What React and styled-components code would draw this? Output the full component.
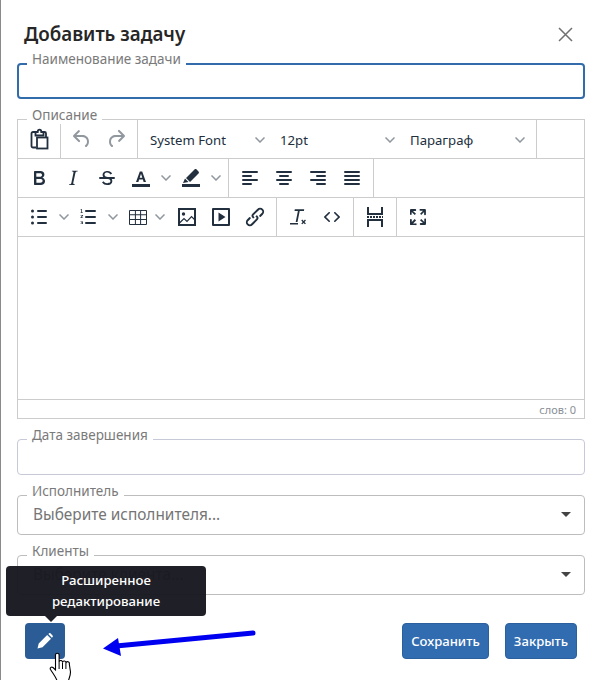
import React from "react";
import styled, { createGlobalStyle } from "styled-components";

const Global = createGlobalStyle`
  html, body { margin: 0; padding: 0; background: #fff; }
  body { font-family: "Noto Sans", "Liberation Sans", sans-serif; color: #212529; }
  * { box-sizing: border-box; }
`;

const Page = styled.div`
  position: relative;
  width: 601px;
  height: 680px;
  overflow: hidden;
  background: #fff;
  border-left: 1px solid #8a8a8a;
  padding: 0 16px 0 16px;
  &::before {
    content: "";
    position: absolute;
    left: -1px;
    top: 413px;
    width: 1px;
    height: 12px;
    background: #555;
  }
`;

const Header = styled.header`
  height: 63px;
  display: flex;
  justify-content: space-between;
  padding: 22px 12px 0 7px;
`;

const Title = styled.h1`
  margin: 0;
  font-size: 18.8px;
  line-height: 24px;
  font-weight: 600;
  color: #262626;
`;

const CloseIcon = styled.svg`
  width: 15px;
  height: 15px;
  margin-top: 5px;
  stroke: #707070;
  stroke-width: 1.5;
  fill: none;
`;

const Field = styled.div`
  position: relative;
  margin-bottom: ${(p) => p.$mb}px;
`;

const Label = styled.label`
  position: absolute;
  left: 10px;
  top: -12px;
  padding: 0 5px;
  background: #fff;
  font-size: 13.5px;
  line-height: 17px;
  color: #7a7a7a;
  z-index: 1;
`;

const TextBox = styled.div`
  height: ${(p) => p.$h}px;
  border: ${(p) => (p.$focus ? "2px solid #336cab" : "1px solid #c8c9d8")};
  border-radius: 4px;
  background: #fff;
`;

const Select = styled.div`
  height: 40px;
  border: 1px solid #bdbdbd;
  border-radius: 4px;
  display: flex;
  align-items: center;
  justify-content: space-between;
  padding: 0 8px 1px 15px;
  font-size: 15.4px;
  color: #757575;
  background: #fff;
`;

const Caret = styled.span`
  width: 0;
  height: 0;
  border-left: 5px solid transparent;
  border-right: 5px solid transparent;
  border-top: 5px solid #444;
  margin-right: 5px;
`;

const Editor = styled.div`
  border: 1px solid #ccc;
  height: 300px;
  display: flex;
  flex-direction: column;
`;

const Row = styled.div`
  height: 39px;
  flex: none;
  border-bottom: 1px solid #ccc;
  display: flex;
  align-items: stretch;
`;

const Group = styled.div`
  display: flex;
  align-items: center;
  padding: 0 4px;
`;

const Sep = styled.span`
  width: 1px;
  flex: none;
  background: #ccc;
`;

const Tool = styled.span`
  width: 34px;
  height: 38px;
  display: flex;
  align-items: center;
  justify-content: center;
  flex: none;
  color: ${(p) => (p.$off ? "rgba(34,47,62,.5)" : "#222f3e")};
`;

const ChevBox = styled.span`
  width: ${(p) => p.$w}px;
  display: flex;
  align-items: center;
  justify-content: ${(p) => p.$j || "center"};
  flex: none;
`;

const FontSelect = styled.span`
  width: 130px;
  height: 38px;
  display: flex;
  align-items: center;
  justify-content: space-between;
  padding: 1px 7px 0 8px;
  font-size: 13.2px;
  color: #222f3e;
  flex: none;
`;

const EditBody = styled.div`
  flex: 1;
`;

const Status = styled.div`
  height: 19px;
  flex: none;
  border-top: 1px solid #ccc;
  display: flex;
  align-items: center;
  justify-content: flex-end;
  padding-right: 8px;
  font-size: 11px;
  color: #8a8f96;
`;

const Footer = styled.footer`
  margin-top: 28px;
  display: flex;
  align-items: flex-start;
  padding: 0 8px;
  gap: 16px;
`;

const PrimaryButton = styled.button`
  height: 36px;
  width: ${(p) => p.$w}px;
  padding: 0;
  border: 1px solid #2c5f9e;
  border-radius: 4px;
  background: #326cb0;
  color: #fff;
  font: 500 13.1px "Noto Sans", sans-serif;
`;

const IconButton = styled.div`
  position: relative;
  width: 40px;
  height: 36px;
  margin-right: auto;
  border-radius: 4px;
  background: #2b5c95;
  display: flex;
  align-items: center;
  justify-content: center;
`;

const Tooltip = styled.div`
  position: absolute;
  left: -19px;
  bottom: 43px;
  width: 200px;
  height: 50px;
  padding-top: 4px;
  background: rgba(24, 24, 32, 0.97);
  border-radius: 4px;
  color: #fff;
  font-size: 13.2px;
  font-weight: 500;
  line-height: 21px;
  text-align: center;
  z-index: 3;
  &::after {
    content: "";
    position: absolute;
    left: 39px;
    top: 100%;
    border-left: 6px solid transparent;
    border-right: 6px solid transparent;
    border-top: 6px solid rgba(24, 24, 32, 0.97);
  }
`;

const Cursor = styled.svg`
  position: absolute;
  left: 48px;
  top: 652px;
  width: 24px;
  height: 28px;
  z-index: 4;
`;

const Arrow = styled.svg`
  position: absolute;
  left: 95px;
  top: 625px;
  width: 170px;
  height: 40px;
  z-index: 4;
`;

const I = ({ d, children }) => (
  <svg width="24" height="24" viewBox="0 0 24 24" fill="currentColor">
    {d ? <path d={d} /> : children}
  </svg>
);

const Chev = ({ c = "rgba(34,47,62,.5)" }) => (
  <svg width="10" height="6" viewBox="0 0 10 6" fill="none" stroke={c} strokeWidth="1.5">
    <path d="M.5.5 5 5 9.500.5" />
  </svg>
);

const P = {
  undo: "M6.400 8H12c3.700 0 6.200 2 6.800 5.100.6 2.700-.4 5.600-2.300 6.800a1 1 0 0 1-1-1.800c1.100-.7 1.800-2.700 1.400-4.600-.5-2.100-2.100-3.500-4.900-3.500H6.400l3.300 3.300a1 1 0 1 1-1.400 1.400l-5-5a1 1 0 0 1 0-1.400l5-5a1 1 0 0 1 1.400 1.400L6.400 8z",
  redo: "M17.600 10H12c-2.800 0-4.400 1.400-4.900 3.500-.4 2 .3 4 1.400 4.600a1 1 0 1 1-1 1.800c-2-1.200-2.900-4.100-2.300-6.800.6-3 3-5.100 6.800-5.100h5.600l-3.300-3.300a1 1 0 1 1 1.400-1.400l5 5a1 1 0 0 1 0 1.400l-5 5a1 1 0 0 1-1.400-1.400l3.300-3.300z",
  bold: "M7.800 19c-.3 0-.5 0-.6-.2l-.2-.5V5.700c0-.2 0-.4.2-.5l.6-.2h5c1.500 0 2.700.3 3.500 1 .7.6 1.100 1.400 1.100 2.500a3 3 0 0 1-.6 1.900c-.4.6-1 1-1.600 1.200.4.100.9.3 1.300.6s.8.7 1 1.200c.4.4.5 1 .5 1.600 0 1.300-.4 2.300-1.300 3-.8.7-2.100 1-3.800 1H7.800zm5-8.300c.6 0 1.200-.1 1.600-.5.4-.3.6-.7.6-1.300 0-1.100-.8-1.700-2.300-1.700H9.300v3.500h3.500zm.5 6c.7 0 1.300-.1 1.700-.4.4-.4.6-.9.6-1.500s-.2-1-.7-1.400c-.4-.3-1-.4-2-.4H9.400v3.800h3.900z",
  italic:
    "M16.700 4.700l-.1.9h-.3c-.6 0-1 0-1.400.3-.3.3-.4.6-.5 1.100l-2.100 9.800v.6c0 .5.4.8 1.400.8h.2l-.2.8H8l.2-.8h.2c1.100 0 1.800-.5 2-1.500l2-9.800.1-.5c0-.6-.4-.8-1.400-.8h-.3l.2-.9h5.800z",
  strike:
    "M15.600 8.500c-.5-.7-1-1.100-1.300-1.300-.6-.4-1.300-.6-2-.6-2.700 0-2.800 1.700-2.800 2.100 0 1.600 1.800 2 3.200 2.300 4.400.9 4.600 2.800 4.600 3.900 0 1.400-.7 4.100-5 4.100A6.200 6.200 0 0 1 7 16.400l1.500-1.100c.4.6 1.600 2 3.700 2 1.600 0 2.500-.4 3-1.200.4-.8.3-2-.8-2.600-.7-.4-1.600-.7-2.900-1-1-.2-3.900-.8-3.900-3.600C7.600 6 10.300 5 12.400 5c2.900 0 4.200 1.600 4.700 2.400l-1.500 1.100zM5 11h14a1 1 0 0 1 0 2H5a1 1 0 0 1 0-2z",
  textColor:
    "M3 18h18v3H3zM7 16 10.800 5.500h2.400L17 16h-2.400l-.7-2.400h-3.800L9.400 16H7zm3.700-4.200h2.600L12 7.800l-1.300 4z",
  hilite:
    "M3 18h18v3H3zM4 17l2-4.500 3.500 3.500L4 17zM7 12l8.500-8.500c.6-.6 1.500-.6 2.100 0l1.900 1.900c.6.6.6 1.500 0 2.100L11 16l-4-4z",
  left: "M5 5h14a1 1 0 0 1 0 2H5a1 1 0 1 1 0-2zm0 4h8a1 1 0 0 1 0 2H5a1 1 0 1 1 0-2zm0 8h8a1 1 0 0 1 0 2H5a1 1 0 0 1 0-2zm0-4h14a1 1 0 0 1 0 2H5a1 1 0 0 1 0-2z",
  center:
    "M5 5h14a1 1 0 0 1 0 2H5a1 1 0 1 1 0-2zm3 4h8a1 1 0 0 1 0 2H8a1 1 0 1 1 0-2zm0 8h8a1 1 0 0 1 0 2H8a1 1 0 0 1 0-2zm-3-4h14a1 1 0 0 1 0 2H5a1 1 0 0 1 0-2z",
  right:
    "M5 5h14a1 1 0 0 1 0 2H5a1 1 0 1 1 0-2zm6 4h8a1 1 0 0 1 0 2h-8a1 1 0 0 1 0-2zm0 8h8a1 1 0 0 1 0 2h-8a1 1 0 0 1 0-2zm-6-4h14a1 1 0 0 1 0 2H5a1 1 0 0 1 0-2z",
  justify:
    "M5 5h14a1 1 0 0 1 0 2H5a1 1 0 1 1 0-2zm0 4h14a1 1 0 0 1 0 2H5a1 1 0 1 1 0-2zm0 4h14a1 1 0 0 1 0 2H5a1 1 0 0 1 0-2zm0 4h14a1 1 0 0 1 0 2H5a1 1 0 0 1 0-2z",
  bullist:
    "M11 5h8a1 1 0 0 1 0 2h-8a1 1 0 0 1 0-2zm0 6h8a1 1 0 0 1 0 2h-8a1 1 0 0 1 0-2zm0 6h8a1 1 0 0 1 0 2h-8a1 1 0 0 1 0-2zM5.500 7.500a1.500 1.500 0 1 1 0-3 1.500 1.500 0 0 1 0 3zm0 6a1.500 1.500 0 1 1 0-3 1.500 1.500 0 0 1 0 3zm0 6a1.500 1.500 0 1 1 0-3 1.500 1.500 0 0 1 0 3z",
  numlist:
    "M10 17h9a1 1 0 0 1 0 2h-9a1 1 0 0 1 0-2zm0-6h9a1 1 0 0 1 0 2h-9a1 1 0 0 1 0-2zm0-6h9a1 1 0 0 1 0 2h-9a1 1 0 0 1 0-2zM6 4v3.500h1V8H4.500v-.5H5.300V4.800L4.500 5v-.6L6 4zm-1.500 6h2.600v.6L5.500 12.500h1.600v.6H4.500v-.6L6.200 10.600H4.500V10zm0 6.500H7v2.500H4.500v-.5h1.800v-.5H5v-.5h1.300v-.5H4.500v-.5z",
  table:
    "M4 5h16a1 1 0 0 1 1 1v13a1 1 0 0 1-1 1H4a1 1 0 0 1-1-1V6a1 1 0 0 1 1-1zm0 1v3.300h4.900V6H4zm5.900 0v3.300h4.200V6H9.900zm5.200 0v3.300H20V6h-4.900zM4 10.300V14h4.900v-3.700H4zm5.900 0V14h4.200v-3.700H9.900zm5.200 0V14H20v-3.700h-4.900zM4 15v4h4.900v-4H4zm5.900 0v4h4.200v-4H9.900zm5.200 0v4H20v-4h-4.900z",
  media:
    "M4 3h16a1 1 0 0 1 1 1v16a1 1 0 0 1-1 1H4a1 1 0 0 1-1-1V4a1 1 0 0 1 1-1zm1 2v14h14V5H5zm4.500 2.500 7 4.500-7 4.500v-9z",
  link: "M6.200 12.300a1 1 0 0 1 1.400 1.400l-2 2a2 2 0 1 0 2.800 2.800l4.800-4.800a1 1 0 0 0 0-1.400 1 1 0 1 1 1.400-1.300 2.900 2.900 0 0 1 0 4L9.800 20a4 4 0 1 1-5.600-5.700l2-2zm11.600-.6a1 1 0 0 1-1.400-1.400l2-2a2 2 0 1 0-2.800-2.800L10.800 10a1 1 0 0 0 0 1.400 1 1 0 1 1-1.400 1.300 2.900 2.900 0 0 1 0-4L14.200 4a4 4 0 1 1 5.600 5.700l-2 2z",
  clear:
    "M13.700 6 11.500 17h-1.800L11.900 6H8.500l.3-1.800h9.400L17.900 6h-4.200zM4 18h8v1.500H4V18zm13.600-2 1.400-1.400.9.900-1.400 1.500 1.400 1.400-.9.900-1.400-1.400-1.400 1.400-.9-.9 1.400-1.400-1.400-1.500.9-.9 1.400 1.400z",
  code: "M9.800 15.700c.3.300.3.800 0 1-.3.400-.9.400-1.200 0l-4.400-4.100a.8.800 0 0 1 0-1.200l4.400-4.200c.3-.3.900-.3 1.200 0 .3.300.3.800 0 1.100L6 12l3.800 3.700zm4.400 0L18 12l-3.800-3.700a.8.800 0 0 1 0-1.100c.3-.3.900-.3 1.200 0l4.400 4.200c.3.300.3.900 0 1.200l-4.400 4.100c-.3.400-.9.400-1.200 0a.8.800 0 0 1 0-1z",
  full: "M15.300 10l-1.200-1.300 2.900-3h-2.300a.9.900 0 1 1 0-1.700H19c.5 0 .9.400.9.900v4.400a.9.900 0 1 1-1.800 0V7l-2.900 3zm0 4l3 3v-2.300a.9.900 0 1 1 1.700 0V19c0 .5-.4.900-.9.900h-4.400a.9.900 0 1 1 0-1.800H17l-3-2.900 1.300-1.200zM10 15.400l-2.900 3h2.300a.9.900 0 1 1 0 1.700H5a.9.900 0 0 1-1-.9v-4.400a.9.900 0 1 1 1.800 0V17l2.900-3 1.200 1.300zM8.700 10L5.700 7v2.300a.9.900 0 0 1-1.700 0V5c0-.5.400-.9.900-.9h4.400a.9.900 0 0 1 0 1.800H7l3 2.900L8.700 10z",
};

const T = ({ n, off, children }) => (
  <Tool $off={off}>
    <I d={P[n]}>{children}</I>
  </Tool>
);

const Font = ({ children }) => (
  <FontSelect>
    {children}
    <Chev />
  </FontSelect>
);

export default function App() {
  return (
    <>
      <Global />
      <Page>
        <Header>
          <Title>Добавить задачу</Title>
          <CloseIcon viewBox="0 0 15 15">
            <path d="M1 1 14 14M14 1 1 14" />
          </CloseIcon>
        </Header>

        <Field $mb={20}>
          <Label>Наименование задачи</Label>
          <TextBox $h={36} $focus />
        </Field>

        <Field $mb={20}>
          <Label>Описание</Label>
          <Editor>
            <Row>
              <Group>
                <T>
                  <g fill="none" stroke="currentColor" strokeWidth="1.800">
                    <path d="M9 20.500H6a1.500 1.500 0 0 1-1.500-1.500V6.500A1.500 1.500 0 0 1 6 5h2.500" />
                    <path d="M8.500 8.500V5h2.200c0-3.200 3.600-3.200 3.600 0h2.200v3.500z" />
                    <path d="M17 5h.5A1.500 1.500 0 0 1 19 6.500V10" />
                    <rect x="10" y="10.500" width="10.500" height="11" />
                  </g>
                </T>
              </Group>
              <Sep />
              <Group>
                <T n="undo" off />
                <T n="redo" off />
              </Group>
              <Sep />
              <Group>
                <Font>System Font</Font>
                <Font>12pt</Font>
                <Font>Параграф</Font>
              </Group>
              <Sep />
            </Row>
            <Row>
              <Group>
                <T n="bold" />
                <T n="italic" />
                <T n="strike" />
                <T n="textColor" />
                <ChevBox $w={16}>
                  <Chev />
                </ChevBox>
                <T n="hilite" />
                <ChevBox $w={16}>
                  <Chev />
                </ChevBox>
              </Group>
              <Sep />
              <Group>
                <T n="left" />
                <T n="center" />
                <T n="right" />
                <T n="justify" />
              </Group>
              <Sep />
            </Row>
            <Row>
              <Group>
                <T n="bullist" />
                <ChevBox $w={15}>
                  <Chev />
                </ChevBox>
                <T n="numlist" />
                <ChevBox $w={16}>
                  <Chev />
                </ChevBox>
                <T n="table" />
                <ChevBox $w={15} $j="flex-start">
                  <Chev />
                </ChevBox>
                <T>
                  <rect x="4" y="4" width="16" height="16" fill="none" stroke="currentColor" strokeWidth="2" />
                  <circle cx="8.500" cy="9" r="1.700" />
                  <path d="M4.500 18 9 13.500l3 3 4.500-5 3.500 3.500" fill="none" stroke="currentColor" strokeWidth="1.200" />
                </T>
                <T n="media" />
                <T n="link" />
              </Group>
              <Sep />
              <Group>
                <T n="clear" />
                <T n="code" />
              </Group>
              <Sep />
              <Group>
                <T>
                  <g fill="none" stroke="currentColor" strokeWidth="2">
                    <path d="M5 2v7h14V2M5 22v-7h14v7" />
                    <path d="M4 12h16" strokeDasharray="2 1" />
                  </g>
                </T>
              </Group>
              <Sep />
              <Group>
                <T n="full" />
              </Group>
            </Row>
            <EditBody />
            <Status>слов: 0</Status>
          </Editor>
        </Field>

        <Field $mb={20}>
          <Label>Дата завершения</Label>
          <TextBox $h={36} />
        </Field>
        <Field $mb={20}>
          <Label>Исполнитель</Label>
          <Select>
            Выберите исполнителя...
            <Caret />
          </Select>
        </Field>
        <Field $mb={0}>
          <Label>Клиенты</Label>
          <Select>
            Выберите клиента...
            <Caret />
          </Select>
        </Field>

        <Footer>
          <IconButton>
            <svg width="16" height="16" viewBox="0 0 16 16" fill="#fff">
              <path d="M.5 15.500l1.200-5L10.200 2l3.800 3.800-8.500 8.500-5 1.200zM11.300 1l.7-.6c.5-.4 1.200-.4 1.600 0l2 2c.4.400.4 1.100 0 1.500l-.7.800L11.300 1z" />
            </svg>
            <Tooltip>
              Расширенное
              <br />
              редактирование
            </Tooltip>
          </IconButton>
          <PrimaryButton $w={87}>Сохранить</PrimaryButton>
          <PrimaryButton $w={72}>Закрыть</PrimaryButton>
        </Footer>

        <Cursor viewBox="0 0 24 28">
          <path
            d="M6.500 3a1.800 1.800 0 0 1 3.600 0V10a1.700 1.700 0 0 1 3.400.5 1.700 1.700 0 0 1 3.400.5 1.700 1.700 0 0 1 3.400 1L21.500 20c0 3-1 5-2 8.500H8c-1-3-3-5.500-6.500-11-1-2 1-3 2.500-2L6.500 18z"
            fill="#fff"
            stroke="#000"
            strokeWidth="1.100"
          />
          <path d="M10.100 10v7M13.500 10.500v6.500M16.900 11v6" stroke="#000" strokeWidth="1" fill="none" />
        </Cursor>
        <Arrow viewBox="0 0 170 40">
          <path d="M157 8 20 21" stroke="#0000f0" strokeWidth="5" strokeLinecap="round" fill="none" />
          <path d="M7 23.500 22 13l3 18z" fill="#0000f0" />
        </Arrow>
      </Page>
    </>
  );
}
